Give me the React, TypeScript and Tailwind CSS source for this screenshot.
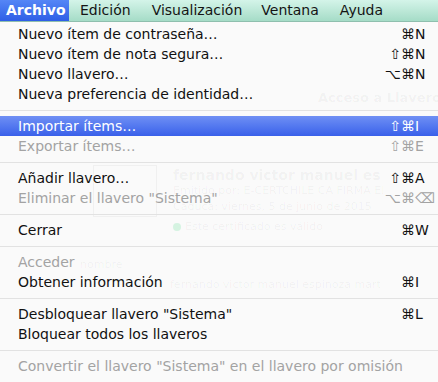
import React from "react";

type Item = {
  label: string;
  mods?: string;
  key?: string;
  disabled?: boolean;
  active?: boolean;
};

type Entry = Item | "sep";

const entries: Entry[] = [
  { label: "Nuevo ítem de contraseña…", key: "N" },
  { label: "Nuevo ítem de nota segura…", mods: "⇧", key: "N" },
  { label: "Nuevo llavero…", mods: "⌥", key: "N" },
  { label: "Nueva preferencia de identidad…" },
  "sep",
  { label: "Importar ítems…", mods: "⇧", key: "I", active: true },
  { label: "Exportar ítems…", mods: "⇧", key: "E", disabled: true },
  "sep",
  { label: "Añadir llavero…", mods: "⇧", key: "A" },
  { label: 'Eliminar el llavero "Sistema"', mods: "⌥", key: "⌫", disabled: true },
  "sep",
  { label: "Cerrar", key: "W" },
  "sep",
  { label: "Acceder", disabled: true },
  { label: "Obtener información", key: "I" },
  "sep",
  { label: 'Desbloquear llavero "Sistema"', key: "L" },
  { label: "Bloquear todos los llaveros" },
  "sep",
  { label: 'Convertir el llavero "Sistema" en el llavero por omisión', disabled: true },
];

function Row({ item }: { item: Item }) {
  const color = item.active
    ? "text-white"
    : item.disabled
    ? "text-[#a3a3a3]"
    : "text-[#111111]";
  return (
    <div
      className={`flex h-[20px] items-center pl-[18px] ${color} ${
        item.active ? "bg-gradient-to-b from-[#6f8ff4] to-[#3a60ea]" : ""
      }`}
    >
      <span className="flex-1 whitespace-nowrap">{item.label}</span>
      {item.key && (
        <>
          <span className="text-right">{item.mods ?? ""}</span>
          <span className="w-[37px] whitespace-nowrap">⌘{item.key}</span>
        </>
      )}
    </div>
  );
}

export default function App() {
  return (
    <div
      className="relative h-[382px] w-[438px] overflow-hidden bg-[#fafafa]"
      style={{ fontFamily: '"DejaVu Sans", "Liberation Sans", sans-serif' }}
    >
      {/* faint window behind the translucent menu */}
      <div className="pointer-events-none absolute inset-0 text-[12px] text-black/[0.045]">
        <div className="absolute left-[318px] top-[88px] whitespace-nowrap font-bold text-[13px]">Acceso a Llaveros</div>
        <div className="absolute left-[93px] top-[165px] h-[52px] w-[64px] border border-black/[0.04]" />
        <div className="absolute left-[173px] top-[165px] w-[208px] overflow-hidden whitespace-nowrap font-bold text-[14px]">
          fernando victor manuel espinoza martinez
        </div>
        <div className="absolute left-[173px] top-[183px] w-[210px] overflow-hidden whitespace-nowrap text-[11px]">
          Emitido por: E-CERTCHILE CA FIRMA ELECTRONICA
        </div>
        <div className="absolute left-[173px] top-[199px] w-[200px] overflow-hidden whitespace-nowrap text-[11px]">
          Caduca: viernes, 5 de junio de 2015 08:00
        </div>
        <div className="absolute left-[173px] top-[219px] flex items-center gap-1 whitespace-nowrap text-[11px]">
          <span className="inline-block h-[8px] w-[8px] rounded-full bg-green-500/15" />
          Este certificado es válido
        </div>
        <div className="absolute left-[80px] top-[257px] text-[11px]">nombre</div>
        <div className="absolute left-[170px] top-[277px] w-[210px] overflow-hidden whitespace-nowrap text-[11px]">
          fernando victor manuel espinoza martinez
        </div>
      </div>

      <div className="relative">
        {/* menu bar */}
        <div className="flex h-[22px] items-center border-b border-[#8fbfae] bg-gradient-to-b from-[#d4f4e9] to-[#a5dcc7] text-[14px] text-[#141414]">
          <div className="flex h-full w-[69px] items-center bg-gradient-to-b from-[#5586f6] to-[#2e5ee6] pl-[6px] font-bold text-white">
            Archivo
          </div>
          <div className="pl-[11px]">Edición</div>
          <div className="pl-[21px]">Visualización</div>
          <div className="pl-[19px]">Ventana</div>
          <div className="pl-[21px]">Ayuda</div>
        </div>

        {/* menu */}
        <div className="pt-[2px] text-[14px]">
          {entries.map((e, i) =>
            e === "sep" ? (
              <div key={i} className="flex h-[12px] items-center">
                <div className="h-px w-full bg-[#e2e2e2]" />
              </div>
            ) : (
              <Row key={i} item={e} />
            )
          )}
        </div>
      </div>
    </div>
  );
}
